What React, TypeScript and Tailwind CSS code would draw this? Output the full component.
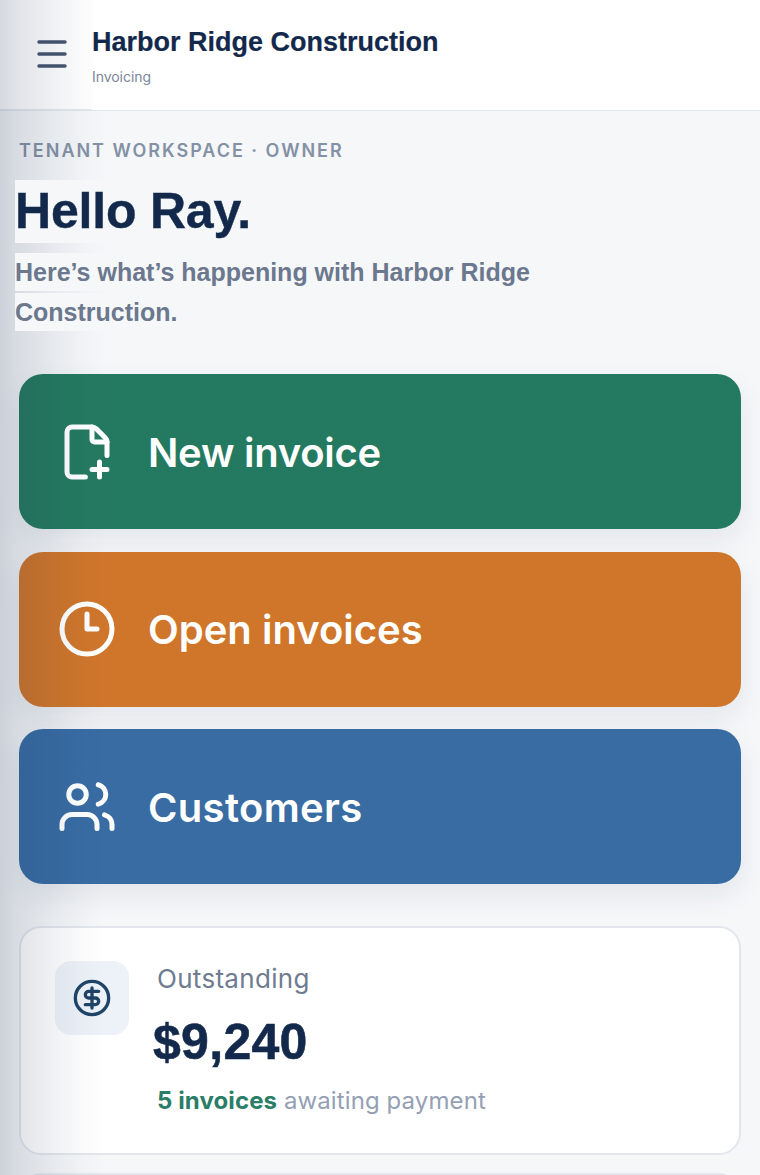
const sans = "font-['Liberation_Sans',Arial,sans-serif]";

function Icon({ children }: { children: React.ReactNode }) {
  return (
    <svg width="60" height="60" viewBox="0 0 24 24" fill="none" stroke="currentColor" strokeWidth="2" strokeLinecap="round" strokeLinejoin="round" className="shrink-0">
      {children}
    </svg>
  );
}

function ActionButton({ icon, label, color, tracking }: { icon: React.ReactNode; label: string; color: string; tracking: string }) {
  return (
    <button className={`flex h-[155px] w-full items-center gap-[31px] rounded-[24px] pl-[38px] text-left text-white shadow-[0_12px_28px_rgba(20,40,75,0.08)] ${color}`}>
      {icon}
      <span className={`mt-[2px] font-['Inter',sans-serif] text-[40px] font-semibold ${tracking}`}>{label}</span>
    </button>
  );
}

export default function App() {
  return (
    <div className="relative h-[1175px] w-[760px] overflow-hidden bg-[#f5f7f9] font-['Inter',sans-serif]">
      <div className="pointer-events-none absolute inset-y-0 left-0 z-10 w-[112px] bg-[linear-gradient(90deg,rgba(20,40,75,0.18),rgba(20,40,75,0.13)_15%,rgba(20,40,75,0.09)_35%,rgba(20,40,75,0.05)_55%,rgba(20,40,75,0.02)_75%,rgba(20,40,75,0)_95%)]" />

      <header className="flex h-[111px] items-center border-b-2 border-[#e4e8ed] bg-white pl-[37px]">
        <svg width="30" height="28" viewBox="0 0 30 28" fill="none" stroke="#45556f" strokeWidth="3.4" strokeLinecap="round" className="mr-[25px] mt-[-1px]">
          <path d="M2 2h26M2 14h26M2 26h26" />
        </svg>
        <div className="relative z-20 h-[110px] flex-1 bg-white pt-[26px]">
          <div className={`${sans} text-[27px] font-bold leading-[33px] text-[#13294b] [-webkit-text-stroke:0.2px_#13294b]`}>Harbor Ridge Construction</div>
          <div className="mt-[8px] text-[14px] leading-[20px] tracking-[-0.05px] text-[#7b879b]">Invoicing</div>
        </div>
      </header>

      <main className="px-[19px]">
        <div className="pt-[28px] text-[18px] font-semibold leading-[24px] tracking-[1.98px] text-[#8491a5]">TENANT WORKSPACE · OWNER</div>

        <h1 className={`${sans} relative z-20 -ml-[4px] mt-[17px] h-[63px] bg-[#f5f7f9] text-[50px] font-bold leading-[63px] tracking-[-0.2px] text-[#13294b] [-webkit-text-stroke:0.4px_#13294b]`}>Hello Ray.</h1>
        <p className={`${sans} relative z-20 -ml-[4px] mt-[10px] text-[25px] font-bold leading-[38px] text-[#6b788e]`}>
          <span className="block h-[38px] bg-[#f5f7f9]">Here’s what’s happening with Harbor Ridge</span>
          <span className="mt-[2px] block h-[38px] bg-[#f5f7f9]">Construction.</span>
        </p>

        <div className="mt-[43px] flex flex-col gap-[22.5px]">
          <ActionButton
            color="bg-[#247a60]"
            label="New invoice"
            tracking="tracking-[-0.27px]"
            icon={
              <Icon>
                <path d="M11.35 22H6a2 2 0 0 1-2-2V4a2 2 0 0 1 2-2h8a2.4 2.4 0 0 1 1.706.706l3.588 3.588A2.4 2.4 0 0 1 20 8v5.35" />
                <path d="M14 2v5a1 1 0 0 0 1 1h5" />
                <path d="M14 19h6" />
                <path d="M17 16v6" />
              </Icon>
            }
          />
          <ActionButton
            color="bg-[#cf762b]"
            label="Open invoices"
            tracking="tracking-[0px]"
            icon={
              <Icon>
                <circle cx="12" cy="12" r="10" />
                <path d="M12 6v6h4" />
              </Icon>
            }
          />
          <ActionButton
            color="bg-[#386ca3]"
            label="Customers"
            tracking="tracking-[0.33px]"
            icon={
              <Icon>
                <path d="M16 20.6V19a4 4 0 0 0-4-4H6a4 4 0 0 0-4 4v1.6" />
                <circle cx="8.2" cy="7" r="3.5" />
                <path d="M22 20.6V19a4 4 0 0 0-3-3.87" />
                <path d="M16.5 3.1a4 4 0 0 1 0 7.75" />
              </Icon>
            }
          />
        </div>

        <section className="mt-[42px] flex h-[229px] gap-[28px] rounded-[22px] border-2 border-[#e3e7ed] bg-white pl-[34px] pt-[33px]">
          <div className="flex h-[74px] w-[74px] shrink-0 items-center justify-center rounded-[16px] bg-[#edf2f8] text-[#1f4468]">
            <svg width="40" height="40" viewBox="0 0 24 24" fill="none" stroke="currentColor" strokeWidth="2" strokeLinecap="round" strokeLinejoin="round">
              <circle cx="12" cy="12" r="10" />
              <path d="M16 8h-6a2 2 0 1 0 0 4h4a2 2 0 1 1 0 4H8" />
              <path d="M12 18V6" />
            </svg>
          </div>
          <div>
            <div className="pt-[1px] text-[26px] leading-[34px] tracking-[0.3px] text-[#6e7b91]">Outstanding</div>
            <div className={`${sans} -ml-[4px] mt-[17px] text-[50px] font-bold leading-[58px] tracking-[0.3px] text-[#13294b] [-webkit-text-stroke:0.6px_#13294b]`}>$9,240</div>
            <div className="mt-[14px] text-[24px] leading-[32px] tracking-[0.1px] text-[#94a0b4]">
              <span className="font-bold text-[#2a7d67]">5 invoices</span> awaiting payment
            </div>
          </div>
        </section>

        <section className="mt-[18px] h-[100px] rounded-[22px] border-2 border-[#e3e7ed] bg-white" />
      </main>
    </div>
  );
}
